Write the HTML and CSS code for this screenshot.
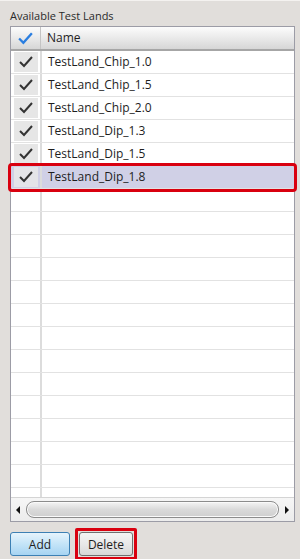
FILE: index.html
```html
<!doctype html>
<html>
<head>
    <meta charset="utf-8">
    <title>Available Test Lands</title>
    <link rel="stylesheet" href="styles.css">
</head>
<body>
    <div class="panel">
        <div class="caption">Available Test Lands</div>
        <div class="grid">
            <div class="row head">
                <div class="chk">
                    <svg width="17" height="15" viewBox="0 0 16 14"><path d="M2 7 L6 11 L14 2" fill="none" stroke="#2a7ee0" stroke-width="2.2"/></svg>
                </div>
                <div class="name">Name</div>
            </div>
            <div class="rows">
                <div class="row"><div class="chk"><span class="box"><svg width="16" height="14" viewBox="0 0 16 14"><path d="M2 7 L6 11 L14 2" fill="none" stroke="#333" stroke-width="2"/></svg></span></div><div class="name">TestLand_Chip_1.0</div></div>
                <div class="row"><div class="chk"><span class="box"><svg width="16" height="14" viewBox="0 0 16 14"><path d="M2 7 L6 11 L14 2" fill="none" stroke="#333" stroke-width="2"/></svg></span></div><div class="name">TestLand_Chip_1.5</div></div>
                <div class="row"><div class="chk"><span class="box"><svg width="16" height="14" viewBox="0 0 16 14"><path d="M2 7 L6 11 L14 2" fill="none" stroke="#333" stroke-width="2"/></svg></span></div><div class="name">TestLand_Chip_2.0</div></div>
                <div class="row"><div class="chk"><span class="box"><svg width="16" height="14" viewBox="0 0 16 14"><path d="M2 7 L6 11 L14 2" fill="none" stroke="#333" stroke-width="2"/></svg></span></div><div class="name">TestLand_Dip_1.3</div></div>
                <div class="row"><div class="chk"><span class="box"><svg width="16" height="14" viewBox="0 0 16 14"><path d="M2 7 L6 11 L14 2" fill="none" stroke="#333" stroke-width="2"/></svg></span></div><div class="name">TestLand_Dip_1.5</div></div>
                <div class="row selected"><div class="chk"><span class="box"><svg width="16" height="14" viewBox="0 0 16 14"><path d="M2 7 L6 11 L14 2" fill="none" stroke="#333" stroke-width="2"/></svg></span></div><div class="name">TestLand_Dip_1.8</div></div>
                <div class="row"><div class="chk"></div><div class="name"></div></div>
                <div class="row"><div class="chk"></div><div class="name"></div></div>
                <div class="row"><div class="chk"></div><div class="name"></div></div>
                <div class="row"><div class="chk"></div><div class="name"></div></div>
                <div class="row"><div class="chk"></div><div class="name"></div></div>
                <div class="row"><div class="chk"></div><div class="name"></div></div>
                <div class="row"><div class="chk"></div><div class="name"></div></div>
                <div class="row"><div class="chk"></div><div class="name"></div></div>
                <div class="row"><div class="chk"></div><div class="name"></div></div>
                <div class="row"><div class="chk"></div><div class="name"></div></div>
                <div class="row"><div class="chk"></div><div class="name"></div></div>
                <div class="row"><div class="chk"></div><div class="name"></div></div>
                <div class="row"><div class="chk"></div><div class="name"></div></div>
                <div class="row"><div class="chk"></div><div class="name"></div></div>
                <div class="row"><div class="chk"></div><div class="name"></div></div>
            </div>
            <div class="hscroll">
                <span class="arrow left"></span>
                <span class="thumb"></span>
                <span class="arrow right"></span>
            </div>
        </div>
        <div class="buttons">
            <button class="btn add">Add</button>
            <span class="mark"><button class="btn del">Delete</button></span>
        </div>
    </div>
</body>
</html>
```

FILE: styles.css
```css
html, body {
    margin: 0;
    height: 100%;
}
body {
    background: #e1dedb;
    font-family: "Open Sans", "Noto Sans", sans-serif;
    font-size: 12px;
    color: #1e1e1e;
    border-top: 1px solid #f4f2f0;
    box-sizing: border-box;
}
.panel {
    display: flex;
    flex-direction: column;
    height: 558px;
    padding: 0 4px 0 10px;
    box-sizing: border-box;
}
.caption {
    height: 25px;
    line-height: 30px;
    font-size: 11px;
    color: #2a2a2a;
}
.grid {
    width: 285px;
    height: 496px;
    border: 1px solid #9c9ca6;
    background: #fff;
    display: flex;
    flex-direction: column;
    box-sizing: border-box;
}
.row {
    display: flex;
    height: 23px;
    border-bottom: 1px solid #e2e2e2;
    box-sizing: border-box;
    flex-shrink: 0;
}
.row .chk {
    width: 29px;
    border-right: 2px solid #dcdcdc;
    display: flex;
    align-items: center;
    justify-content: center;
    flex-shrink: 0;
}
.row .name {
    flex: 1;
    padding-left: 6px;
    line-height: 22px;
}
.row .box {
    width: 24px;
    height: 20px;
    background: #e6e6e6;
    display: flex;
    align-items: center;
    justify-content: center;
}
.head {
    height: 24px;
    background: linear-gradient(#fcfcfc, #e6e6e6 60%, #d6d6d6);
    border-bottom: 2px solid #a6a6a6;
}
.head .chk {
    border-right: 1px solid #c4c4c4;
}
.head .name {
    line-height: 22px;
}
.rows {
    flex: 1;
    min-height: 0;
    overflow: visible;
    clip-path: inset(0 -8px 0 -8px);
}
.row.selected {
    background: #d0d0e6;
    outline: 3px solid #d9000f;
    outline-offset: 0;
    border-radius: 1px;
}
.row.selected .box {
    background: #e4e4e8;
}
.hscroll {
    height: 23px;
    border-top: 1px solid #d4d4d4;
    background: linear-gradient(#f6f6f6, #ececec);
    display: flex;
    align-items: center;
    padding: 0 5px;
    gap: 4px;
    flex-shrink: 0;
}
.arrow {
    width: 0;
    height: 0;
    border-top: 4px solid transparent;
    border-bottom: 4px solid transparent;
}
.arrow.left {
    border-right: 4px solid #111;
}
.arrow.right {
    border-left: 4px solid #111;
}
.thumb {
    flex: 1;
    height: 15px;
    border: 1px solid #8c8c8c;
    border-radius: 8px;
    background: linear-gradient(#f4f4f4, #dadada 50%, #cfcfcf);
    box-shadow: inset 0 0 0 1px #fafafa;
    margin: 0 2px;
}
.buttons {
    display: flex;
    align-items: center;
    gap: 5px;
    padding-top: 6px;
}
.btn {
    font-family: "Open Sans", "Noto Sans", sans-serif;
    font-size: 12px;
    color: #1e1e1e;
    height: 24px;
    padding: 0;
    border-radius: 3px;
}
.add {
    width: 60px;
    border: 1px solid #3c80b4;
    background: linear-gradient(#e6f4fc, #c4e4f8 50%, #a6d4f2);
}
.del {
    width: 54px;
    border: 1px solid #707070;
    background: linear-gradient(#f4f4f4, #e8e8e8 50%, #d8d8d8);
}
.mark {
    display: flex;
    border: 3px solid #d9000f;
    border-radius: 2px;
    padding: 1px;
}
```
